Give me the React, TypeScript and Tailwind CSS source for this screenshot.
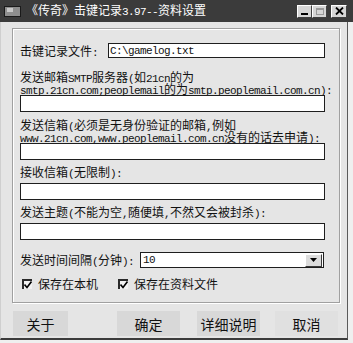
import React from "react";

const M = ({ children }: { children: React.ReactNode }) => (
  <span className="font-['Liberation_Mono',monospace] text-[11px] leading-[12px] tracking-[-0.6px]">{children}</span>
);

const Line = ({ children }: { children: React.ReactNode }) => (
  <div className="h-[12px] leading-[12px] text-[12px] whitespace-nowrap overflow-visible">{children}</div>
);

const Field = ({ children }: { children?: React.ReactNode }) => (
  <div className="bg-white border border-[#1e1e1e] h-[17px] w-[305px] flex items-center pl-[2px] leading-[12px]">
    {children}
  </div>
);

const Check = () => (
  <div className="w-[10px] h-[10px] bg-[#f2f2f2] border-l-2 border-t-2 border-[#2a2a2a] flex items-center justify-center">
    <svg width="8" height="8" viewBox="0 0 8 8">
      <path d="M0.5 3.5 L3 6.5 L7.5 0.5" stroke="#000" strokeWidth="1.6" fill="none" />
    </svg>
  </div>
);

export default function App() {
  return (
    <div className="w-[353px] h-[343px] bg-[#efefef] relative overflow-hidden flex flex-col font-['Noto_Sans_CJK_SC',sans-serif] text-[#111]">
      {/* Title bar */}
      <div className="h-[22px] shrink-0 bg-[#3b3b3b] flex items-center pl-[4px] pr-[6px]">
        <div className="w-[17px] h-[11px] bg-[#8e8e8e] border border-[#1a1a1a] relative">
          <div className="absolute left-[2px] top-[1px] w-[6px] h-[4px] bg-[#c8c8c8]" />
        </div>
        <span className="ml-[5px] text-white text-[12px] leading-[12px] whitespace-nowrap">
          《传奇》击键记录<M>3.97--</M>资料设置
        </span>
        <div className="ml-auto flex items-center">
          <div className="w-[15px] h-[13px] bg-[#d6d6d6] border border-t-white border-l-white border-r-[#404040] border-b-[#404040] flex items-end justify-center pb-[2px]">
            <div className="w-[7px] h-[2px] bg-black" />
          </div>
          <div className="w-[15px] h-[13px] bg-[#d6d6d6] border border-t-white border-l-white border-r-[#404040] border-b-[#404040] flex items-center justify-center">
            <div className="w-[8px] h-[7px] border border-[#9a9a9a] border-t-2" />
          </div>
          <div className="ml-[4px] w-[16px] h-[13px] bg-[#d6d6d6] border border-t-white border-l-white border-r-[#404040] border-b-[#404040] flex items-center justify-center">
            <svg width="9" height="8" viewBox="0 0 9 8">
              <path d="M1 0.5 L8 7.5 M8 0.5 L1 7.5" stroke="#000" strokeWidth="1.8" />
            </svg>
          </div>
        </div>
      </div>

      {/* Body */}
      <div className="w-[348px] h-[318px] bg-[#e5e5e5] border-l border-l-[#cfcfcf] border-r border-r-[#5a5a5a] border-b-2 border-b-[#3c3c3c] flex flex-col">
        {/* Frame */}
        <div className="mt-[6px] ml-[11px] w-[328px] h-[275px] border border-[#a0a0a0] shadow-[1px_1px_0_#ffffff,inset_1px_1px_0_#ffffff] flex flex-col pl-[7px]">
          <div className="mt-[14px] flex items-center h-[15px]">
            <Line>
              击键记录文件<M>:</M>
            </Line>
            <div className="ml-[10px] bg-white border border-[#1e1e1e] h-[15px] w-[217px] flex items-center pl-[1px] leading-[12px]">
              <M>C:\gamelog.txt</M>
            </div>
          </div>

          <div className="mt-[13px]">
            <Line>
              发送邮箱<M>SMTP</M>服务器<M>(</M>如<M>21cn</M>的为
            </Line>
            <Line>
              <M>smtp.21cn.com;peoplemail</M>的为<M>smtp.peoplemail.com.cn):</M>
            </Line>
          </div>
          <div className="mt-[0px]">
            <Field />
          </div>

          <div className="mt-[7px]">
            <Line>
              发送信箱<M>(</M>必须是无身份验证的邮箱<M>,</M>例如
            </Line>
            <Line>
              <M>www.21cn.com,www.peoplemail.com.cn</M>没有的话去申请<M>):</M>
            </Line>
          </div>
          <div className="mt-[0px]">
            <Field />
          </div>

          <div className="mt-[6px]">
            <Line>
              接收信箱<M>(</M>无限制<M>):</M>
            </Line>
          </div>
          <div className="mt-[5px]">
            <Field />
          </div>

          <div className="mt-[6px]">
            <Line>
              发送主题<M>(</M>不能为空<M>,</M>随便填<M>,</M>不然又会被封杀<M>):</M>
            </Line>
          </div>
          <div className="mt-[5px]">
            <Field />
          </div>

          <div className="mt-[12px] flex items-center h-[16px]">
            <Line>
              发送时间间隔<M>(</M>分钟<M>):</M>
            </Line>
            <div className="ml-[6px] w-[184px] h-[16px] bg-white border border-[#1e1e1e] flex items-center pl-[2px] pr-[1px] leading-[12px]">
              <M>10</M>
              <div className="ml-auto w-[17px] h-[13px] bg-[#dcdcdc] border border-t-white border-l-white border-r-[#3a3a3a] border-b-[#3a3a3a] flex items-center justify-center">
                <svg width="7" height="4" viewBox="0 0 7 4">
                  <path d="M0 0 L7 0 L3.5 4 Z" fill="#000" />
                </svg>
              </div>
            </div>
          </div>

          <div className="mt-[10px] flex items-center h-[12px]">
            <div className="ml-[2px]">
              <Check />
            </div>
            <div className="ml-[6px]">
              <Line>保存在本机</Line>
            </div>
            <div className="ml-[20px]">
              <Check />
            </div>
            <div className="ml-[6px]">
              <Line>保存在资料文件</Line>
            </div>
          </div>
        </div>

        {/* Buttons */}
        <div className="mt-[8px] flex items-center pl-[12px] text-[14px] leading-[14px]">
          <div className="w-[55px] h-[25px] bg-[#d8d8d8] flex items-center justify-center">关于</div>
          <div className="ml-[49px] w-[63px] h-[25px] bg-[#d8d8d8] flex items-center justify-center">确定</div>
          <div className="ml-[17px] w-[63px] h-[25px] bg-[#d8d8d8] flex items-center justify-center">详细说明</div>
          <div className="ml-[15px] w-[63px] h-[25px] bg-[#e0e0e0] flex items-center justify-center">取消</div>
        </div>
      </div>
    </div>
  );
}
